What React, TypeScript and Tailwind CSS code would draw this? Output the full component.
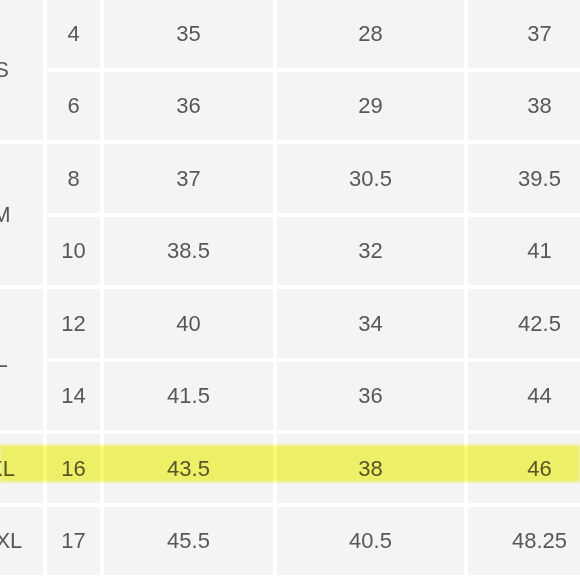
import React from "react";

const rows: { size: number; chest: string; waist: string; hip: string; row: string }[] = [
  { size: 4, chest: "35", waist: "28", hip: "37", row: "row-start-1" },
  { size: 6, chest: "36", waist: "29", hip: "38", row: "row-start-2" },
  { size: 8, chest: "37", waist: "30.5", hip: "39.5", row: "row-start-3" },
  { size: 10, chest: "38.5", waist: "32", hip: "41", row: "row-start-4" },
  { size: 12, chest: "40", waist: "34", hip: "42.5", row: "row-start-5" },
  { size: 14, chest: "41.5", waist: "36", hip: "44", row: "row-start-6" },
  { size: 16, chest: "43.5", waist: "38", hip: "46", row: "row-start-7" },
  { size: 17, chest: "45.5", waist: "40.5", hip: "48.25", row: "row-start-8" },
];

const groups: { label: string; cls: string }[] = [
  { label: "S", cls: "row-start-1 row-span-2" },
  { label: "M", cls: "row-start-3 row-span-2" },
  { label: "L", cls: "row-start-5 row-span-2" },
  { label: "XL", cls: "row-start-7 row-span-1" },
  { label: "XXL", cls: "row-start-8 row-span-1" },
];

const cell =
  "bg-[#f4f4f4] flex items-center justify-center text-[22px] text-[#585858]";

export default function App() {
  return (
    <div className="relative w-[580px] h-[580px] overflow-hidden bg-white font-['Liberation_Sans',Arial,sans-serif]">
      <div className="ml-[-40px] mt-[-1px] grid w-max grid-cols-[83px_53px_169px_187px_143px] grid-rows-[repeat(8,68.5px)] gap-[4px]">
        {groups.map((g) => (
          <div key={g.label} className={`${cell} col-start-1 ${g.cls}`}>
            {g.label}
          </div>
        ))}
        {rows.map((r) => (
          <React.Fragment key={r.size}>
            <div className={`${cell} col-start-2 ${r.row}`}>{r.size}</div>
            <div className={`${cell} col-start-3 ${r.row}`}>{r.chest}</div>
            <div className={`${cell} col-start-4 ${r.row}`}>{r.waist}</div>
            <div className={`${cell} col-start-5 ${r.row}`}>{r.hip}</div>
          </React.Fragment>
        ))}
      </div>
      <div className="pointer-events-none absolute left-0 top-[445px] h-[37px] w-[580px] bg-[#f8fa6c] mix-blend-multiply blur-[1.5px]" />
    </div>
  );
}
